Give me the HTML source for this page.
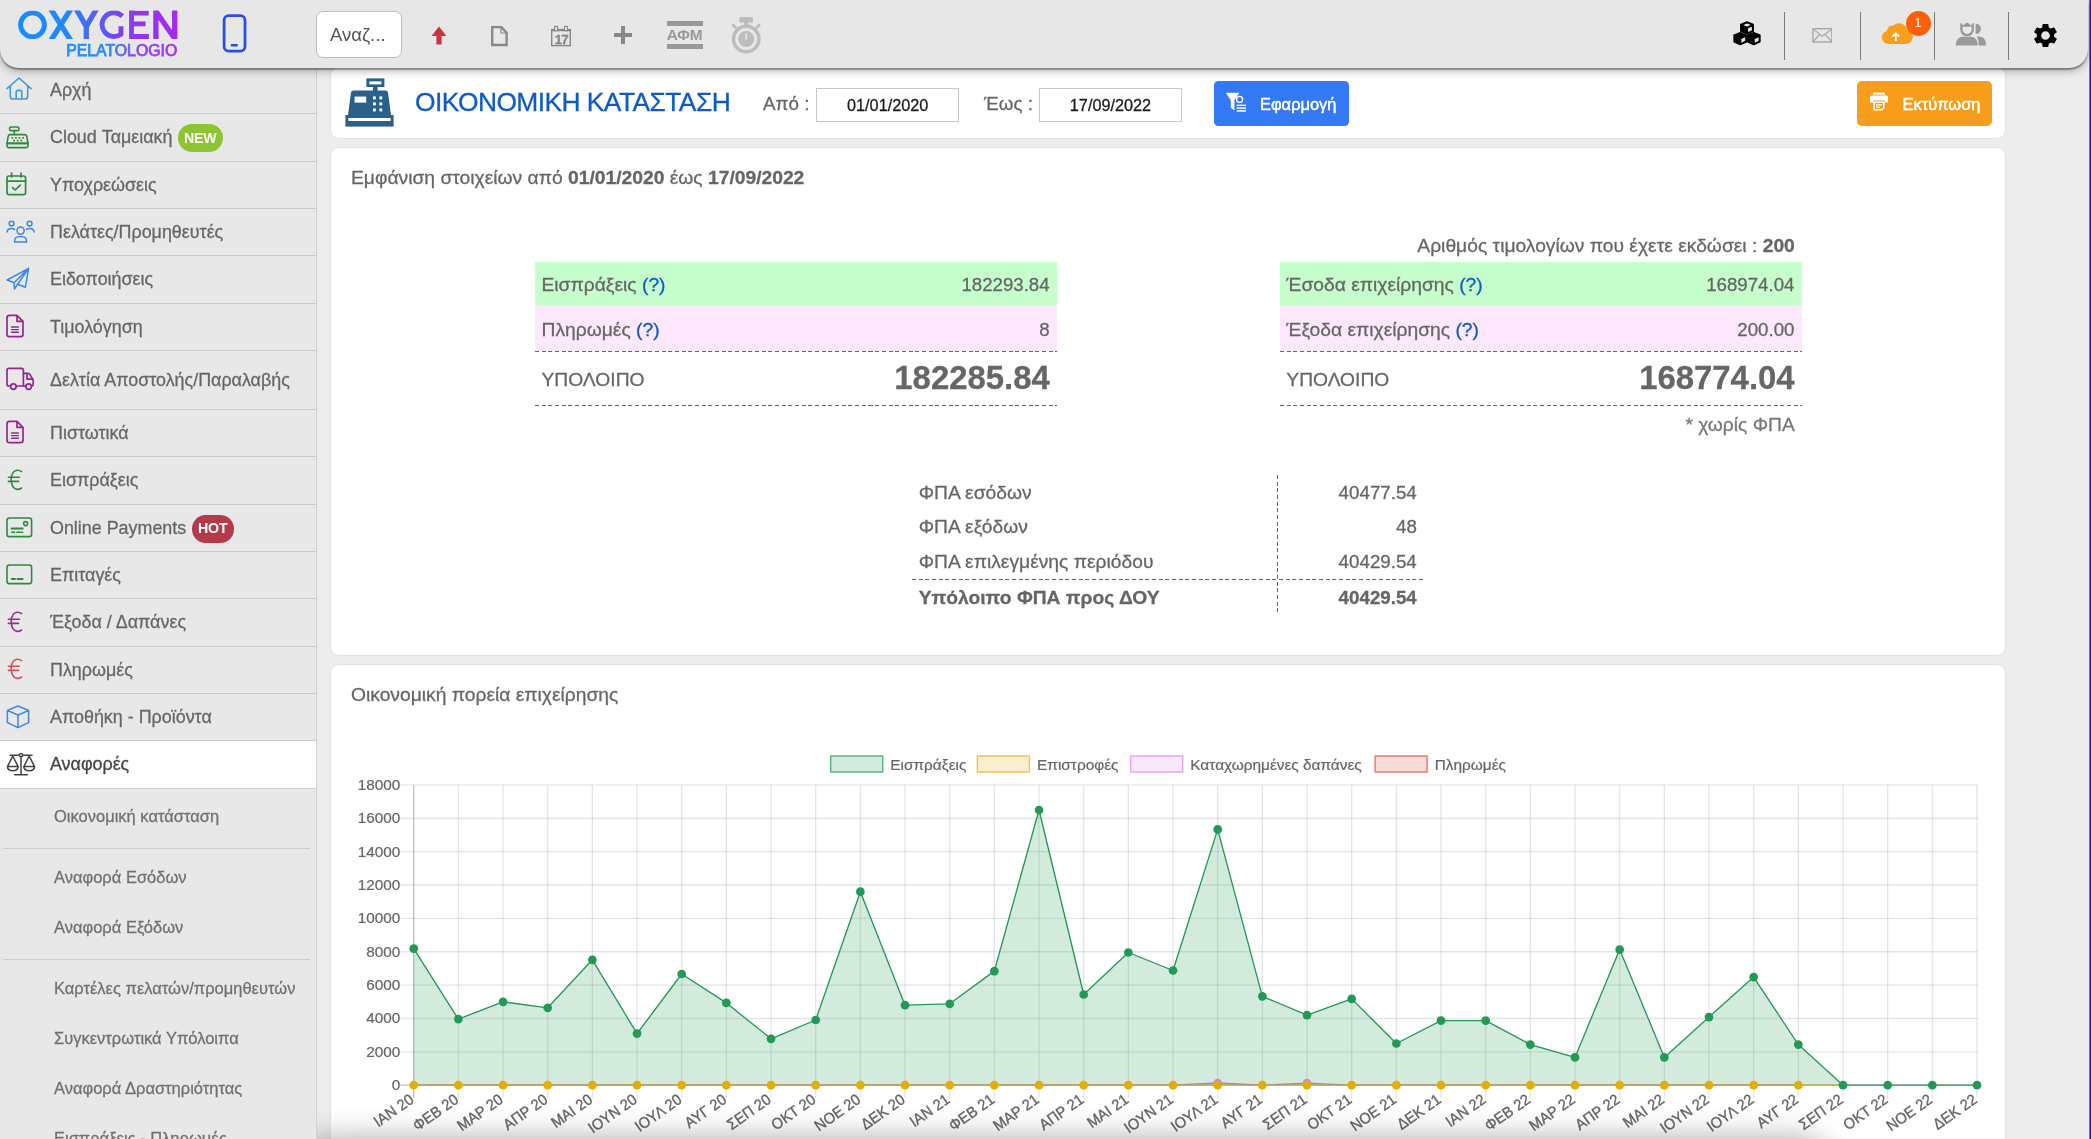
<!DOCTYPE html>
<html lang="el">
<head>
<meta charset="utf-8">
<title>Οικονομική Κατάσταση</title>
<style>
*{box-sizing:border-box}
html,body{margin:0;padding:0}
body{width:2091px;height:1139px;overflow:hidden;position:relative;background:#ededed;font-family:"Liberation Sans",sans-serif;color:#666;font-size:17.9px}
#edge{position:absolute;left:2089px;top:0;width:2px;height:1139px;background:linear-gradient(to right,rgba(17,17,216,.6) 0,rgba(17,17,216,.6) 1px,#1111d8 1px,#1111d8 2px);z-index:50}
#hdr{position:absolute;left:0;top:0;width:2088px;height:67.6px;background:#e7e7e7;border-radius:0 0 19px 19px;box-shadow:0 1.6px 1.2px rgba(0,0,0,.32),0 3px 8px rgba(0,0,0,.3);z-index:20}
#side{position:absolute;left:0;top:0;width:317px;height:1139px;background:#e8e8e8;border-right:1px solid #d2d2d2;z-index:5}
.mi{position:absolute;left:0;width:316px;border-bottom:1.4px solid #cbcbcb}
.mi span.t{position:absolute;left:50px;white-space:nowrap;color:#666;font-size:17.9px;line-height:20px}
.mi svg{position:absolute}
.sub{position:absolute;left:54px;white-space:nowrap;color:#707070;font-size:16.5px;line-height:20px}
.subsep{position:absolute;left:3px;width:307px;height:1px;background:#cfcfcf}
.card{position:absolute;background:#fff;border-radius:9px;z-index:2;border:1px solid #e3e3e3}
.abs{position:absolute;white-space:nowrap}
#content,#sidetxt,#hdrin{will-change:transform}
#side .t,#side .sub,#content div.abs{-webkit-text-stroke:.28px currentColor}
#fade{position:absolute;left:300px;top:1150px;width:1524px;height:60px;border-radius:30px;z-index:4;box-shadow:0 0 30px 12px rgba(0,0,0,.33)}
</style>
</head>
<body>
<div id="edge"></div>
<div id="hdr">
  <!-- logo -->
  <svg class="abs" style="left:0;top:0" width="262" height="68" viewBox="0 0 262 68">
    <defs>
      <linearGradient id="lg1" x1="18" y1="0" x2="178" y2="0" gradientUnits="userSpaceOnUse">
        <stop offset="0" stop-color="#188cff"/><stop offset=".3" stop-color="#1e88ff"/><stop offset=".45" stop-color="#4a68f8"/><stop offset=".56" stop-color="#6a50f5"/><stop offset=".68" stop-color="#8c3af2"/><stop offset=".8" stop-color="#9a30f2"/><stop offset="1" stop-color="#a42af6"/>
      </linearGradient>
      <linearGradient id="lg2" x1="66" y1="0" x2="178" y2="0" gradientUnits="userSpaceOnUse">
        <stop offset="0" stop-color="#1e90ff"/><stop offset=".4" stop-color="#2a86ff"/><stop offset=".62" stop-color="#8a48f5"/><stop offset="1" stop-color="#a832f5"/>
      </linearGradient>
    </defs>
    <clipPath id="lc"><rect x="0" y="10.6" width="200" height="28.5"/></clipPath>
    <g fill="none" stroke="url(#lg1)" clip-path="url(#lc)">
      <circle cx="32.5" cy="24.85" r="11.95" stroke-width="4.9"/>
      <path d="M50.1 8 L71.5 41.6 M71.5 8 L50.1 41.6" stroke-width="5.3"/>
      <path d="M75.6 8 L86.3 26.4 L97 8 M86.3 24.6 V42" stroke-width="5.3"/>
      <path d="M122.3 16.3 A11.85 11.85 0 1 0 120.95 34.2 V26.2" stroke-width="4.9" stroke-linejoin="miter"/>
      <path d="M131.5 10 V40 M129.1 13.1 H148.7 M129.1 23.8 H145.6 M129.1 36.5 H148.9" stroke-width="4.8"/>
      <path d="M155.9 42 V10 M174.7 8 V40 M155.3 10.4 L175.3 39.4" stroke-width="5.3" stroke-linejoin="bevel"/>
    </g>
    <text x="66.2" y="55.5" font-family="Liberation Sans, sans-serif" font-size="15.7" fill="url(#lg2)" stroke="url(#lg2)" stroke-width=".75" textLength="111" lengthAdjust="spacingAndGlyphs">PELATOLOGIO</text>
    <!-- phone -->
    <rect x="224.1" y="15.7" width="20.9" height="35.5" rx="4.6" fill="none" stroke="#2b4fe0" stroke-width="2.8"/>
    <rect x="230.7" y="44" width="7.2" height="2.4" rx="1" fill="#2b4fe0"/>
  </svg>
  <!-- search -->
  <div class="abs" style="left:316px;top:11px;width:86px;height:47px;background:#fff;border:1px solid #bdbdbd;border-radius:7px"></div>
  <div class="abs" style="left:330px;top:24px;font-size:18.5px;line-height:22px;color:#555">Αναζ...</div>
  <!-- red arrow -->
  <svg class="abs" style="left:431px;top:26px" width="16" height="19" viewBox="0 0 16 19"><path d="M8 .6 L15.4 10 H10.6 V18.4 H5.4 V10 H.6 Z" fill="#cc3340"/></svg>
  <!-- file -->
  <svg class="abs" style="left:490px;top:25px" width="19" height="22" viewBox="0 0 19 22"><path d="M2.2 2.2 H11.4 L16.6 7.6 V20 H2.2 Z" fill="none" stroke="#878787" stroke-width="2.3" stroke-linejoin="miter"/><path d="M11 2.6 V8 H16.2" fill="none" stroke="#878787" stroke-width="1.2"/></svg>
  <!-- calendar -->
  <svg class="abs" style="left:550px;top:25px" width="22" height="22" viewBox="0 0 22 22">
    <rect x="1.7" y="4.6" width="18.6" height="16" fill="none" stroke="#878787" stroke-width="1.4"/>
    <rect x="1.7" y="4.2" width="18.6" height="2" fill="#878787"/>
    <rect x="4.6" y="1.4" width="3" height="4.4" fill="#e8e8e8" stroke="#878787" stroke-width="1.1"/><rect x="14.4" y="1.4" width="3" height="4.4" fill="#e8e8e8" stroke="#878787" stroke-width="1.1"/>
    <text x="11.3" y="19.2" text-anchor="middle" font-family="Liberation Sans, sans-serif" font-weight="bold" font-size="13.4" fill="#878787" stroke="#878787" stroke-width=".3" letter-spacing="-1">17</text>
  </svg>
  <!-- plus -->
  <svg class="abs" style="left:614px;top:26px" width="18" height="18" viewBox="0 0 18 18"><path d="M7 0 H11 V7 H18 V11 H11 V18 H7 V11 H0 V7 H7 Z" fill="#878787"/></svg>
  <!-- AFM -->
  <div class="abs" style="left:666.5px;top:21px;width:36px;height:4.8px;background:#999"></div>
  <div class="abs" style="left:666.5px;top:43.8px;width:36px;height:4.8px;background:#999"></div>
  <div class="abs" style="left:666.5px;top:26.5px;width:36px;text-align:center;font-size:15.4px;line-height:16px;font-weight:bold;color:#979797;letter-spacing:-.2px">ΑΦΜ</div>
  <!-- stopwatch -->
  <svg class="abs" style="left:730px;top:16px" width="32" height="39" viewBox="0 0 32 39">
    <circle cx="16.2" cy="23" r="12.7" fill="none" stroke="#bdbdbd" stroke-width="3.5"/>
    <circle cx="16.2" cy="23" r="8" fill="#bdbdbd"/>
    <rect x="9.4" y="1" width="13.6" height="5.4" rx="1.2" fill="#bdbdbd"/>
    <rect x="14" y="5" width="4.4" height="5" fill="#bdbdbd"/>
    <path d="M3.6 9.6 L7 12.8 M28.8 9.6 L25.4 12.8" stroke="#bdbdbd" stroke-width="2.4" stroke-linecap="round"/>
    <circle cx="3.6" cy="9.4" r="1.7" fill="#bdbdbd"/><circle cx="28.8" cy="9.4" r="1.7" fill="#bdbdbd"/>
    <rect x="15.4" y="17.4" width="1.7" height="6.2" fill="#e8e8e8"/>
  </svg>
  <!-- cubes -->
  <svg class="abs" style="left:1733.4px;top:21.2px" width="28" height="25" viewBox="0 0 29 26" id="cubes">
    <g fill="#000" stroke="#000" stroke-width="1.4" stroke-linejoin="round">
      <path d="M14.5 1 L21 3.6 V10.6 L14.5 13.4 L8 10.6 V3.6 Z"/>
      <path d="M7.5 12 L14 14.6 V21.6 L7.5 24.6 L1 21.6 V14.6 Z"/>
      <path d="M21.5 12 L28 14.6 V21.6 L21.5 24.6 L15 21.6 V14.6 Z"/>
    </g>
    <g fill="#e8e8e8">
      <path d="M14.5 2.6 L18.4 4.2 L14.5 5.8 L10.6 4.2 Z"/>
      <path d="M15.6 7.6 L19.6 5.9 V9.6 L15.6 11.4 Z"/>
      <path d="M8.6 18.6 L12.6 16.9 V20.6 L8.6 22.5 Z"/>
      <path d="M22.6 18.6 L26.6 16.9 V20.6 L22.6 22.5 Z"/>
    </g>
  </svg>
  <div class="abs" style="left:1784px;top:12px;width:1px;height:48px;background:#7a7a7a"></div>
  <!-- envelope -->
  <svg class="abs" style="left:1811.6px;top:28.3px" width="20.8" height="14.8" viewBox="0 0 22 16"><rect x=".8" y=".8" width="20.4" height="14.4" fill="none" stroke="#a6a6a6" stroke-width="1.5"/><path d="M1 1.2 L11 9 L21 1.2 M1 14.8 L8 7 M21 14.8 L14 7" fill="none" stroke="#a6a6a6" stroke-width="1.3"/></svg>
  <div class="abs" style="left:1859.5px;top:12px;width:1px;height:48px;background:#7a7a7a"></div>
  <!-- cloud -->
  <svg class="abs" style="left:1881px;top:22px" width="32" height="23" viewBox="0 0 32 23">
    <path d="M7.2 22 A6.6 6.6 0 0 1 5.8 9 A6.6 6.6 0 0 1 12.4 3.6 A8.4 8.4 0 0 1 26.4 8.2 A7 7 0 0 1 24.8 22 Z" fill="#f8a01e"/>
    <path d="M14.8 19 V11.6 M11.4 14.6 L14.8 11.2 L18.2 14.6" fill="none" stroke="#fff" stroke-width="1.8"/>
  </svg>
  <div class="abs" style="left:1905.5px;top:11px;width:25px;height:25px;border-radius:50%;background:#ff5f06;color:#fff;font-size:12.5px;line-height:24.5px;text-align:center">1</div>
  <div class="abs" style="left:1934px;top:12px;width:1px;height:48px;background:#7a7a7a"></div>
  <!-- users -->
  <svg class="abs" style="left:1955px;top:22px" width="32" height="24" viewBox="0 0 32 24">
    <g fill="#9a9a9a">
      <path d="M20.6 1.4 A5.3 5.3 0 0 1 20.6 12 Z"/>
      <path d="M21.6 14.6 H23.6 C28 14.6 31 17.6 31 22 V23.4 H23.6 V21 C23.6 18.4 22.8 16.2 21.6 14.6 Z"/>
      <path d="M.9 23.4 V22 C.9 17.6 4.4 14.4 8.8 14.4 H15 C19.4 14.4 22.6 17.6 22.6 22 V23.4 Z" stroke="#e8e8e8" stroke-width="1.3" paint-order="stroke"/>
      <path d="M5.2 .6 L8 3.2 L12.1 .4 L16.2 3.2 L19 .6 V7.6 A6.9 6.9 0 0 1 5.2 7.6 Z" stroke="#e8e8e8" stroke-width="1.1" paint-order="stroke"/>
    </g>
    <path d="M7.6 4.8 H16.6 V7.4 A4.5 4.5 0 0 1 7.6 7.4 Z" fill="#e8e8e8"/>
  </svg>
  <div class="abs" style="left:2008px;top:12px;width:1px;height:48px;background:#7a7a7a"></div>
  <!-- gear -->
  <svg class="abs" style="left:2031.4px;top:20.6px" width="29" height="29" viewBox="0 0 24 24"><path fill="#000" d="M19.14,12.94c0.04-0.3,0.06-0.61,0.06-0.94c0-0.32-0.02-0.64-0.07-0.94l2.03-1.58c0.18-0.14,0.23-0.41,0.12-0.61 l-1.92-3.32c-0.12-0.22-0.37-0.29-0.59-0.22l-2.39,0.96c-0.5-0.38-1.03-0.7-1.62-0.94L14.4,2.81c-0.04-0.24-0.24-0.41-0.48-0.41 h-3.84c-0.24,0-0.43,0.17-0.47,0.41L9.25,5.35C8.66,5.59,8.12,5.92,7.63,6.29L5.24,5.33c-0.22-0.08-0.47,0-0.59,0.22L2.74,8.87 C2.62,9.08,2.66,9.34,2.86,9.48l2.03,1.58C4.84,11.36,4.8,11.69,4.8,12s0.02,0.64,0.07,0.94l-2.03,1.58 c-0.18,0.14-0.23,0.41-0.12,0.61l1.92,3.32c0.12,0.22,0.37,0.29,0.59,0.22l2.39-0.96c0.5,0.38,1.03,0.7,1.62,0.94l0.36,2.54 c0.05,0.24,0.24,0.41,0.48,0.41h3.84c0.24,0,0.44-0.17,0.47-0.41l0.36-2.54c0.59-0.24,1.13-0.56,1.62-0.94l2.39,0.96 c0.22,0.08,0.47,0,0.59-0.22l1.92-3.32c0.12-0.22,0.07-0.47-0.12-0.61L19.14,12.94z M12,15.6c-1.98,0-3.6-1.62-3.6-3.6 s1.62-3.6,3.6-3.6s3.6,1.62,3.6,3.6S13.98,15.6,12,15.6z"/></svg>
</div>
<div id="side"><div id="sidetxt" style="position:absolute;left:0;top:0;width:316px;height:1139px">
<div class="mi" style="top:66.90px;height:47.33px">
<svg width="26" height="23" viewBox="0 0 26 23" style="left:6px;top:10.6px"><defs><linearGradient id="hg" x1="0" y1="0" x2="0" y2="1"><stop offset="0" stop-color="#4aa3f0"/><stop offset="1" stop-color="#3f9acb"/></linearGradient></defs><path d="M1 11.6 L13 1 L25 11.6 M4.3 9.4 V19.4 Q4.3 22 6.9 22 H19.1 Q21.7 22 21.7 19.4 V9.4 M10.2 22 V15.2 Q10.2 13.4 12 13.4 H14 Q15.8 13.4 15.8 15.2 V22" fill="none" stroke="#3f9ad8" stroke-width="1.6" stroke-linecap="round" stroke-linejoin="round"/></svg>
<span class="t" style="top:13.17px">Αρχή</span>
</div>
<div class="mi" style="top:114.23px;height:47.33px">
<svg width="23" height="25" viewBox="0 0 23 25" style="left:6px;top:11.4px"><g fill="none" stroke="#2e8b3a" stroke-width="1.6" stroke-linejoin="round" stroke-linecap="round"><rect x="3.6" y="1" width="9.4" height="3.6" rx="1.4"/><path d="M8.3 4.8 V8.6"/><path d="M4.2 8.6 H18.8 Q20.4 8.6 20.8 10.2 L22 17.4 H1 L2.2 10.2 Q2.6 8.6 4.2 8.6 Z"/><path d="M1 17.4 H22 V19.6 Q22 21.6 20 21.6 H3 Q1 21.6 1 19.6 Z"/></g><g fill="#2e8b3a"><rect x="5.4" y="11" width="1.8" height="1.6"/><rect x="9" y="11" width="1.8" height="1.6"/><rect x="12.6" y="11" width="1.8" height="1.6"/><rect x="16.2" y="11" width="1.8" height="1.6"/><rect x="7.2" y="13.8" width="1.8" height="1.6"/><rect x="10.8" y="13.8" width="1.8" height="1.6"/><rect x="14.4" y="13.8" width="1.8" height="1.6"/></g></svg>
<span class="t" style="top:13.17px">Cloud Ταμειακή</span>
<span class="abs" style="left:177.5px;top:10px;width:45.5px;height:28px;border-radius:14px;background:#8cc531;color:#fff;font-weight:bold;font-size:14.2px;line-height:28px;text-align:center;letter-spacing:-.2px">NEW</span>
</div>
<div class="mi" style="top:161.57px;height:47.33px">
<svg width="21" height="24" viewBox="0 0 21 24" style="left:6px;top:10.5px"><g fill="none" stroke="#2e8b3a" stroke-width="1.7" stroke-linecap="round" stroke-linejoin="round"><rect x="1" y="4" width="18.6" height="18.6" rx="2.2"/><path d="M1 9.2 H19.6 M5.6 1 V5 M15 1 V5 M6.6 15.6 L9.2 18 L14.2 13.2"/></g></svg>
<span class="t" style="top:13.17px">Υποχρεώσεις</span>
</div>
<div class="mi" style="top:208.90px;height:47.33px">
<svg width="30" height="23" viewBox="0 0 30 23" style="left:6px;top:11.6px"><g fill="none" stroke="#3b86e8" stroke-width="1.5" stroke-linecap="round" stroke-linejoin="round"><circle cx="14.6" cy="10.6" r="3.6"/><path d="M8.6 22 Q8 16.4 14.6 16.4 Q21.2 16.4 20.6 22 Z"/><circle cx="5.6" cy="3.6" r="2.4"/><circle cx="23.6" cy="3.6" r="2.4"/><path d="M1 12 Q1.4 8.4 5.6 8.4 Q7.6 8.4 8.6 9.4 M28.2 12 Q27.8 8.4 23.6 8.4 Q21.6 8.4 20.6 9.4"/></g></svg>
<span class="t" style="top:13.17px">Πελάτες/Προμηθευτές</span>
</div>
<div class="mi" style="top:256.23px;height:47.33px">
<svg width="24" height="24" viewBox="0 0 24 24" style="left:6px;top:11.0px"><g fill="none" stroke="#3b86e8" stroke-width="1.5" stroke-linejoin="round" stroke-linecap="round"><path d="M22.6 1.4 L1.2 13 L8 15.8 L22.6 1.4 L19.4 20.2 L11.6 17.2 L8.4 22 L8 15.8 M11.6 17.2 L22.6 1.4"/></g></svg>
<span class="t" style="top:13.17px">Ειδοποιήσεις</span>
</div>
<div class="mi" style="top:303.57px;height:47.33px">
<svg width="19" height="24" viewBox="0 0 19 24" style="left:6px;top:10.6px"><g fill="none" stroke="#93278f" stroke-width="1.7" stroke-linejoin="round" stroke-linecap="round"><path d="M3.4 1.4 H11 L17 7.4 V20.2 Q17 22.6 14.6 22.6 H3.4 Q1 22.6 1 20.2 V3.8 Q1 1.4 3.4 1.4 Z M11 1.6 V7.4 H16.8"/><path d="M5.6 13 H12.4 M5.6 15.6 H12.4 M5.6 18.2 H12.4" stroke-width="1.4"/></g></svg>
<span class="t" style="top:13.17px">Τιμολόγηση</span>
</div>
<div class="mi" style="top:350.90px;height:59.00px">
<svg width="29" height="24" viewBox="0 0 29 24" style="left:6px;top:16.0px"><g fill="none" stroke="#93278f" stroke-width="1.7" stroke-linejoin="round" stroke-linecap="round"><path d="M4.6 19 H3 Q1 19 1 17 V3.4 Q1 1.4 3 1.4 H15.4 Q17.4 1.4 17.4 3.4 V19 H10.2"/><path d="M17.4 6.4 H22 Q23.4 6.4 24.2 7.8 L26.6 12 Q27.2 13 27.2 14 V17.6 Q27.2 19 25.8 19 H25.6 M19.8 19 H17.4"/><path d="M21 6.6 V12.2 H26.4"/><circle cx="7.4" cy="19.6" r="2.8"/><circle cx="22.6" cy="19.6" r="2.8"/></g></svg>
<span class="t" style="top:19.00px">Δελτία Αποστολής/Παραλαβής</span>
</div>
<div class="mi" style="top:409.90px;height:47.33px">
<svg width="19" height="24" viewBox="0 0 19 24" style="left:6px;top:10.6px"><g fill="none" stroke="#93278f" stroke-width="1.7" stroke-linejoin="round" stroke-linecap="round"><path d="M3.4 1.4 H11 L17 7.4 V20.2 Q17 22.6 14.6 22.6 H3.4 Q1 22.6 1 20.2 V3.8 Q1 1.4 3.4 1.4 Z M11 1.6 V7.4 H16.8"/><path d="M5.6 13 H12.4 M5.6 15.6 H12.4 M5.6 18.2 H12.4" stroke-width="1.4"/></g></svg>
<span class="t" style="top:13.17px">Πιστωτικά</span>
</div>
<div class="mi" style="top:457.23px;height:47.33px">
<svg width="16" height="22" viewBox="0 0 16 22" style="left:7px;top:11.6px"><g fill="none" stroke="#2e8b3a" stroke-width="1.6" stroke-linecap="round"><path d="M14.6 2.6 Q12.4 1 10 1.2 Q4.4 2 4.2 10.6 Q4.4 19.4 10 20.4 Q12.4 20.6 14.6 19"/><path d="M1.4 8.2 H12.4 M1.4 12.4 H11.6"/></g></svg>
<span class="t" style="top:13.17px">Εισπράξεις</span>
</div>
<div class="mi" style="top:504.57px;height:47.33px">
<svg width="27" height="21" viewBox="0 0 27 21" style="left:6px;top:12.4px"><g fill="none" stroke="#2e8b3a" stroke-width="1.6" stroke-linejoin="round" stroke-linecap="round"><rect x="1" y="1" width="24.6" height="18.6" rx="2.4"/><circle cx="19.6" cy="6.6" r="2"/><path d="M5.6 11.6 H16.6" stroke-width="2"/><path d="M5.6 15.2 H8.6 M10.8 15.2 H16.4" stroke-width="1.5"/></g></svg>
<span class="t" style="top:13.17px">Online Payments</span>
<span class="abs" style="left:191.5px;top:10.6px;width:42.5px;height:27.4px;border-radius:13.7px;background:#b43a4a;color:#fff;font-weight:bold;font-size:14.2px;line-height:27.4px;text-align:center;letter-spacing:-.2px">HOT</span>
</div>
<div class="mi" style="top:551.90px;height:47.33px">
<svg width="27" height="21" viewBox="0 0 27 21" style="left:6px;top:12.4px"><g fill="none" stroke="#2e8b3a" stroke-width="1.6" stroke-linejoin="round" stroke-linecap="round"><rect x="1" y="1" width="24.6" height="18.6" rx="2.4"/><path d="M5.8 15 H9 M11.4 15 H16.6" stroke-width="1.9"/></g></svg>
<span class="t" style="top:13.17px">Επιταγές</span>
</div>
<div class="mi" style="top:599.23px;height:47.33px">
<svg width="16" height="22" viewBox="0 0 16 22" style="left:7px;top:11.6px"><g fill="none" stroke="#9b2d96" stroke-width="1.6" stroke-linecap="round"><path d="M14.6 2.6 Q12.4 1 10 1.2 Q4.4 2 4.2 10.6 Q4.4 19.4 10 20.4 Q12.4 20.6 14.6 19"/><path d="M1.4 8.2 H12.4 M1.4 12.4 H11.6"/></g></svg>
<span class="t" style="top:13.17px">Έξοδα / Δαπάνες</span>
</div>
<div class="mi" style="top:646.57px;height:47.33px">
<svg width="16" height="22" viewBox="0 0 16 22" style="left:7px;top:11.6px"><g fill="none" stroke="#d0525a" stroke-width="1.6" stroke-linecap="round"><path d="M14.6 2.6 Q12.4 1 10 1.2 Q4.4 2 4.2 10.6 Q4.4 19.4 10 20.4 Q12.4 20.6 14.6 19"/><path d="M1.4 8.2 H12.4 M1.4 12.4 H11.6"/></g></svg>
<span class="t" style="top:13.17px">Πληρωμές</span>
</div>
<div class="mi" style="top:693.90px;height:47.33px">
<svg width="24" height="24" viewBox="0 0 24 24" style="left:6px;top:10.8px"><g fill="none" stroke="#3b86e8" stroke-width="1.5" stroke-linejoin="round" stroke-linecap="round"><path d="M12 1 L22.6 5.4 V17.6 L12 22.6 L1.4 17.6 V5.4 Z M1.6 5.6 L12 10 L22.4 5.6 M12 10 V22.4"/></g></svg>
<span class="t" style="top:13.17px">Αποθήκη - Προϊόντα</span>
</div>
<div class="mi" style="top:741.23px;height:47.33px;background:#fff">
<svg width="30" height="23" viewBox="0 0 30 23" style="left:6px;top:11.6px"><g fill="none" stroke="#444" stroke-width="1.5" stroke-linejoin="round" stroke-linecap="round"><path d="M4 2.2 H26 M15 2.4 V21.6 M8.6 21.8 H21.4"/><circle cx="15" cy="2.2" r="1.6" fill="#fff"/><path d="M6.8 3 L1.6 13.4 H12 L6.8 3 M1.4 13.4 Q1.6 17.8 6.8 17.8 Q12 17.8 12.2 13.4"/><path d="M23.2 3 L18 13.4 H28.4 L23.2 3 M17.8 13.4 Q18 17.8 23.2 17.8 Q28.4 17.8 28.6 13.4"/></g></svg>
<span class="t" style="top:13.17px;color:#444">Αναφορές</span>
</div>
<div class="sub" style="top:805.5px">Οικονομική κατάσταση</div>
<div class="sub" style="top:867.0px">Αναφορά Εσόδων</div>
<div class="sub" style="top:916.9px">Αναφορά Εξόδων</div>
<div class="sub" style="top:978.0px">Καρτέλες πελατών/προμηθευτών</div>
<div class="sub" style="top:1028.4px">Συγκεντρωτικά Υπόλοιπα</div>
<div class="sub" style="top:1078.0px">Αναφορά Δραστηριότητας</div>
<div class="sub" style="top:1128.3px">Εισπράξεις - Πληρωμές</div>
<div class="subsep" style="top:847.6px"></div>
<div class="subsep" style="top:958.7px"></div>
</div></div>
<div class="card" style="left:330.2px;top:65.5px;width:1675.4px;height:73.5px"></div>
<div class="card" style="left:330.2px;top:147.2px;width:1675.4px;height:508.4px"></div>
<div class="card" style="left:330.2px;top:664.2px;width:1675.4px;height:520px"></div>
<div id="content" style="position:absolute;left:0;top:0;width:2091px;height:1139px;z-index:3">
<svg class="abs" style="left:345px;top:78px" width="49" height="49" viewBox="0 0 49 49">
<g fill="#2a608b"><rect x="21.4" y="0.4" width="18" height="8.6"/><rect x="28" y="8" width="4.6" height="5"/>
<path d="M8.6 12.4 H40.4 Q42.6 12.4 43 14.6 L46 37 H3 L6 14.6 Q6.4 12.4 8.6 12.4 Z"/>
<rect x="0.4" y="37" width="48.2" height="11.6"/></g>
<g fill="#fff"><rect x="24.4" y="3.4" width="12" height="3"/><rect x="9.6" y="18.6" width="11.6" height="6"/>
<rect x="28" y="18.4" width="2.8" height="3"/><rect x="34.4" y="18.4" width="2.8" height="3"/>
<rect x="28" y="24.4" width="2.8" height="3"/><rect x="34.4" y="24.4" width="2.8" height="3"/>
<rect x="28" y="30.4" width="2.8" height="3"/><rect x="34.4" y="30.4" width="2.8" height="3"/>
<rect x="3.4" y="40" width="42.2" height="3"/></g></svg>
<div class="abs" style="left:415.0px;top:86.71px;font-size:26.4px;line-height:31.68px;color:#0d5bc6;font-weight:normal;letter-spacing:-.57px;">ΟΙΚΟΝΟΜΙΚΗ ΚΑΤΑΣΤΑΣΗ</div>
<div class="abs" style="left:763.0px;top:93.21px;font-size:18.8px;line-height:22.56px;color:#666;font-weight:normal;">Από :</div>
<div class="abs" style="left:984.0px;top:93.21px;font-size:18.8px;line-height:22.56px;color:#666;font-weight:normal;">Έως :</div>
<div class="abs" style="left:816.2px;top:87.6px;width:143px;height:34px;border:1px solid #c8c8c8;background:#fff"></div>
<div class="abs" style="left:1039px;top:87.6px;width:143px;height:34px;border:1px solid #c8c8c8;background:#fff"></div>
<div class="abs" style="left:0.0px;top:95.62px;font-size:16.25px;line-height:19.50px;color:#1c1c1c;font-weight:normal;left:816.2px;width:143px;text-align:center;">01/01/2020</div>
<div class="abs" style="left:0.0px;top:95.62px;font-size:16.25px;line-height:19.50px;color:#1c1c1c;font-weight:normal;left:1039px;width:143px;text-align:center;">17/09/2022</div>
<div class="abs" style="left:1214.4px;top:81px;width:134.6px;height:44.5px;border-radius:4.5px;background:#3479f6"></div>
<svg class="abs" style="left:1225px;top:91.5px" width="23" height="21" viewBox="0 0 23 21"><g fill="#fff"><path d="M.8 .8 H14.4 L9.4 8.2 V18.6 L5.8 15.8 V8.2 Z"/><circle cx="14.6" cy="7.4" r="3" fill="none" stroke="#fff" stroke-width="1.4"/><rect x="11.6" y="12.6" width="9.4" height="1.5"/><rect x="11.6" y="15.4" width="9.4" height="1.5"/><rect x="11.6" y="18.2" width="9.4" height="1.5"/></g></svg>
<div class="abs" style="left:1260.0px;top:95.43px;font-size:16.45px;line-height:19.74px;color:#fff;font-weight:normal;text-shadow:0 0 .6px #fff;">Εφαρμογή</div>
<div class="abs" style="left:1856.8px;top:81px;width:135.5px;height:44.6px;border-radius:5px;background:#f89c1b"></div>
<svg class="abs" style="left:1869px;top:92px" width="20" height="19" viewBox="0 0 20 19"><g fill="#fff"><rect x="4" y=".6" width="12" height="2"/><path d="M3 3.6 H17 Q19 3.6 19 5.6 V10.6 H15.6 V8.4 H4.4 V10.6 H1 V5.6 Q1 3.6 3 3.6 Z"/><path d="M4.4 9.6 H15.6 V16 L13.2 18.4 H4.4 Z M6 11 V17 H12.4 L14 15.4 V11 Z"/><rect x="7" y="12.2" width="6" height="1.3"/><rect x="7" y="14.6" width="4" height="1.3"/></g></svg>
<div class="abs" style="left:1902.6px;top:95.03px;font-size:16.45px;line-height:19.74px;color:#fff;font-weight:normal;text-shadow:0 0 .6px #fff;">Εκτύπωση</div>
<div class="abs" style="left:351.0px;top:166.18px;font-size:19.25px;line-height:23.10px;color:#666;font-weight:normal;">Εμφάνιση στοιχείων από <b>01/01/2020</b> έως <b>17/09/2022</b></div>
<div class="abs" style="left:535px;top:261.6px;width:522px;height:44.6px;background:#c6ffcc"></div>
<div class="abs" style="left:535px;top:306.2px;width:522px;height:44.6px;background:#fee8fe"></div>
<div class="abs" style="left:535px;top:350.7px;width:522px;height:1.3px;background:repeating-linear-gradient(to right,#666 0,#666 4px,transparent 4px,transparent 6.67px)"></div>
<div class="abs" style="left:535px;top:404.59999999999997px;width:522px;height:1.3px;background:repeating-linear-gradient(to right,#666 0,#666 4px,transparent 4px,transparent 6.67px)"></div>
<div class="abs" style="left:541.5px;top:272.58px;font-size:19.25px;line-height:23.10px;color:#666;font-weight:normal;">Εισπράξεις <span style="color:#0d5bc6">(?)</span></div>
<div class="abs" style="left:541.5px;top:317.58px;font-size:19.25px;line-height:23.10px;color:#666;font-weight:normal;">Πληρωμές <span style="color:#0d5bc6">(?)</span></div>
<div class="abs" style="left:541.5px;top:367.58px;font-size:19.25px;line-height:23.10px;color:#666;font-weight:normal;">ΥΠΟΛΟΙΠΟ</div>
<div class="abs" style="right:1041.4px;top:273.63px;font-size:18.67px;line-height:22.40px;color:#666;font-weight:normal;">182293.84</div>
<div class="abs" style="right:1041.4px;top:318.63px;font-size:18.67px;line-height:22.40px;color:#666;font-weight:normal;">8</div>
<div class="abs" style="right:1041.2px;top:357.56px;font-size:32.9px;line-height:39.48px;color:#666;font-weight:bold;">182285.84</div>
<div class="abs" style="left:1279.8px;top:261.6px;width:522px;height:44.6px;background:#c6ffcc"></div>
<div class="abs" style="left:1279.8px;top:306.2px;width:522px;height:44.6px;background:#fee8fe"></div>
<div class="abs" style="left:1279.8px;top:350.7px;width:522px;height:1.3px;background:repeating-linear-gradient(to right,#666 0,#666 4px,transparent 4px,transparent 6.67px)"></div>
<div class="abs" style="left:1279.8px;top:404.59999999999997px;width:522px;height:1.3px;background:repeating-linear-gradient(to right,#666 0,#666 4px,transparent 4px,transparent 6.67px)"></div>
<div class="abs" style="left:1286.3px;top:272.58px;font-size:19.25px;line-height:23.10px;color:#666;font-weight:normal;">Έσοδα επιχείρησης <span style="color:#0d5bc6">(?)</span></div>
<div class="abs" style="left:1286.3px;top:317.58px;font-size:19.25px;line-height:23.10px;color:#666;font-weight:normal;">Έξοδα επιχείρησης <span style="color:#0d5bc6">(?)</span></div>
<div class="abs" style="left:1286.3px;top:367.58px;font-size:19.25px;line-height:23.10px;color:#666;font-weight:normal;">ΥΠΟΛΟΙΠΟ</div>
<div class="abs" style="right:296.6px;top:273.63px;font-size:18.67px;line-height:22.40px;color:#666;font-weight:normal;">168974.04</div>
<div class="abs" style="right:296.6px;top:318.63px;font-size:18.67px;line-height:22.40px;color:#666;font-weight:normal;">200.00</div>
<div class="abs" style="right:296.4px;top:357.56px;font-size:32.9px;line-height:39.48px;color:#666;font-weight:bold;">168774.04</div>
<div class="abs" style="right:296.2px;top:233.78px;font-size:19.25px;line-height:23.10px;color:#666;font-weight:normal;">Αριθμός τιμολογίων που έχετε εκδώσει : <b>200</b></div>
<div class="abs" style="right:296.2px;top:413.18px;font-size:19.25px;line-height:23.10px;color:#777;font-weight:normal;">* χωρίς ΦΠΑ</div>
<div class="abs" style="left:918.7px;top:481.08px;font-size:19.25px;line-height:23.10px;color:#666;font-weight:normal;">ΦΠΑ εσόδων</div>
<div class="abs" style="right:674.2px;top:481.55px;font-size:18.75px;line-height:22.50px;color:#666;font-weight:normal;">40477.54</div>
<div class="abs" style="left:918.7px;top:515.48px;font-size:19.25px;line-height:23.10px;color:#666;font-weight:normal;">ΦΠΑ εξόδων</div>
<div class="abs" style="right:674.2px;top:515.95px;font-size:18.75px;line-height:22.50px;color:#666;font-weight:normal;">48</div>
<div class="abs" style="left:918.7px;top:550.18px;font-size:19.25px;line-height:23.10px;color:#666;font-weight:normal;">ΦΠΑ επιλεγμένης περιόδου</div>
<div class="abs" style="right:674.2px;top:550.65px;font-size:18.75px;line-height:22.50px;color:#666;font-weight:normal;">40429.54</div>
<div class="abs" style="left:918.7px;top:586.38px;font-size:19.25px;line-height:23.10px;color:#666;font-weight:bold;">Υπόλοιπο ΦΠΑ προς ΔΟΥ</div>
<div class="abs" style="right:674.2px;top:586.85px;font-size:18.75px;line-height:22.50px;color:#666;font-weight:bold;">40429.54</div>
<div class="abs" style="left:912px;top:578.7px;width:512px;height:1.3px;background:repeating-linear-gradient(to right,#666 0,#666 4px,transparent 4px,transparent 6.67px)"></div>
<div class="abs" style="left:1276.9px;top:475px;width:1.3px;height:140px;background:repeating-linear-gradient(to bottom,#666 0,#666 4px,transparent 4px,transparent 6.67px)"></div>
<div class="abs" style="left:351.0px;top:683.28px;font-size:19.25px;line-height:23.10px;color:#666;font-weight:normal;">Οικονομική πορεία επιχείρησης</div>
<svg class="abs" style="left:331px;top:740px" width="1674" height="399" viewBox="331 740 1674 399" font-family="Liberation Sans, sans-serif">
<g fill="none"><path d="M400.4 784.90 H1977.6" stroke="rgba(0,0,0,.1)" stroke-width="1.33"/><path d="M400.4 818.27 H1977.6" stroke="rgba(0,0,0,.1)" stroke-width="1.33"/><path d="M400.4 851.63 H1977.6" stroke="rgba(0,0,0,.1)" stroke-width="1.33"/><path d="M400.4 885.00 H1977.6" stroke="rgba(0,0,0,.1)" stroke-width="1.33"/><path d="M400.4 918.37 H1977.6" stroke="rgba(0,0,0,.1)" stroke-width="1.33"/><path d="M400.4 951.73 H1977.6" stroke="rgba(0,0,0,.1)" stroke-width="1.33"/><path d="M400.4 985.10 H1977.6" stroke="rgba(0,0,0,.1)" stroke-width="1.33"/><path d="M400.4 1018.47 H1977.6" stroke="rgba(0,0,0,.1)" stroke-width="1.33"/><path d="M400.4 1051.83 H1977.6" stroke="rgba(0,0,0,.1)" stroke-width="1.33"/><path d="M400.4 1085.20 H1977.6" stroke="rgba(0,0,0,.25)" stroke-width="1.33"/><path d="M413.70 784.9 V1098.2" stroke="rgba(0,0,0,.25)" stroke-width="1.33"/><path d="M458.37 784.9 V1098.2" stroke="rgba(0,0,0,.1)" stroke-width="1.33"/><path d="M503.03 784.9 V1098.2" stroke="rgba(0,0,0,.1)" stroke-width="1.33"/><path d="M547.70 784.9 V1098.2" stroke="rgba(0,0,0,.1)" stroke-width="1.33"/><path d="M592.36 784.9 V1098.2" stroke="rgba(0,0,0,.1)" stroke-width="1.33"/><path d="M637.03 784.9 V1098.2" stroke="rgba(0,0,0,.1)" stroke-width="1.33"/><path d="M681.69 784.9 V1098.2" stroke="rgba(0,0,0,.1)" stroke-width="1.33"/><path d="M726.36 784.9 V1098.2" stroke="rgba(0,0,0,.1)" stroke-width="1.33"/><path d="M771.03 784.9 V1098.2" stroke="rgba(0,0,0,.1)" stroke-width="1.33"/><path d="M815.69 784.9 V1098.2" stroke="rgba(0,0,0,.1)" stroke-width="1.33"/><path d="M860.36 784.9 V1098.2" stroke="rgba(0,0,0,.1)" stroke-width="1.33"/><path d="M905.02 784.9 V1098.2" stroke="rgba(0,0,0,.1)" stroke-width="1.33"/><path d="M949.69 784.9 V1098.2" stroke="rgba(0,0,0,.1)" stroke-width="1.33"/><path d="M994.35 784.9 V1098.2" stroke="rgba(0,0,0,.1)" stroke-width="1.33"/><path d="M1039.02 784.9 V1098.2" stroke="rgba(0,0,0,.1)" stroke-width="1.33"/><path d="M1083.69 784.9 V1098.2" stroke="rgba(0,0,0,.1)" stroke-width="1.33"/><path d="M1128.35 784.9 V1098.2" stroke="rgba(0,0,0,.1)" stroke-width="1.33"/><path d="M1173.02 784.9 V1098.2" stroke="rgba(0,0,0,.1)" stroke-width="1.33"/><path d="M1217.68 784.9 V1098.2" stroke="rgba(0,0,0,.1)" stroke-width="1.33"/><path d="M1262.35 784.9 V1098.2" stroke="rgba(0,0,0,.1)" stroke-width="1.33"/><path d="M1307.01 784.9 V1098.2" stroke="rgba(0,0,0,.1)" stroke-width="1.33"/><path d="M1351.68 784.9 V1098.2" stroke="rgba(0,0,0,.1)" stroke-width="1.33"/><path d="M1396.35 784.9 V1098.2" stroke="rgba(0,0,0,.1)" stroke-width="1.33"/><path d="M1441.01 784.9 V1098.2" stroke="rgba(0,0,0,.1)" stroke-width="1.33"/><path d="M1485.68 784.9 V1098.2" stroke="rgba(0,0,0,.1)" stroke-width="1.33"/><path d="M1530.34 784.9 V1098.2" stroke="rgba(0,0,0,.1)" stroke-width="1.33"/><path d="M1575.01 784.9 V1098.2" stroke="rgba(0,0,0,.1)" stroke-width="1.33"/><path d="M1619.67 784.9 V1098.2" stroke="rgba(0,0,0,.1)" stroke-width="1.33"/><path d="M1664.34 784.9 V1098.2" stroke="rgba(0,0,0,.1)" stroke-width="1.33"/><path d="M1709.01 784.9 V1098.2" stroke="rgba(0,0,0,.1)" stroke-width="1.33"/><path d="M1753.67 784.9 V1098.2" stroke="rgba(0,0,0,.1)" stroke-width="1.33"/><path d="M1798.34 784.9 V1098.2" stroke="rgba(0,0,0,.1)" stroke-width="1.33"/><path d="M1843.00 784.9 V1098.2" stroke="rgba(0,0,0,.1)" stroke-width="1.33"/><path d="M1887.67 784.9 V1098.2" stroke="rgba(0,0,0,.1)" stroke-width="1.33"/><path d="M1932.33 784.9 V1098.2" stroke="rgba(0,0,0,.1)" stroke-width="1.33"/><path d="M1977.00 784.9 V1098.2" stroke="rgba(0,0,0,.1)" stroke-width="1.33"/></g>
<text x="400.3" y="789.8" text-anchor="end" font-size="15.3" fill="#666" stroke="#666" stroke-width=".22">18000</text>
<text x="400.3" y="823.2" text-anchor="end" font-size="15.3" fill="#666" stroke="#666" stroke-width=".22">16000</text>
<text x="400.3" y="856.5" text-anchor="end" font-size="15.3" fill="#666" stroke="#666" stroke-width=".22">14000</text>
<text x="400.3" y="889.9" text-anchor="end" font-size="15.3" fill="#666" stroke="#666" stroke-width=".22">12000</text>
<text x="400.3" y="923.3" text-anchor="end" font-size="15.3" fill="#666" stroke="#666" stroke-width=".22">10000</text>
<text x="400.3" y="956.6" text-anchor="end" font-size="15.3" fill="#666" stroke="#666" stroke-width=".22">8000</text>
<text x="400.3" y="990.0" text-anchor="end" font-size="15.3" fill="#666" stroke="#666" stroke-width=".22">6000</text>
<text x="400.3" y="1023.4" text-anchor="end" font-size="15.3" fill="#666" stroke="#666" stroke-width=".22">4000</text>
<text x="400.3" y="1056.7" text-anchor="end" font-size="15.3" fill="#666" stroke="#666" stroke-width=".22">2000</text>
<text x="400.3" y="1090.1" text-anchor="end" font-size="15.3" fill="#666" stroke="#666" stroke-width=".22">0</text>
<text transform="translate(411.7,1097.4) rotate(-35) scale(.95,1)" text-anchor="end" font-size="15.4" fill="#666" stroke="#666" stroke-width=".34" dy="5.5">ΙΑΝ 20</text>
<text transform="translate(456.4,1097.4) rotate(-35) scale(.95,1)" text-anchor="end" font-size="15.4" fill="#666" stroke="#666" stroke-width=".34" dy="5.5">ΦΕΒ 20</text>
<text transform="translate(501.0,1097.4) rotate(-35) scale(.95,1)" text-anchor="end" font-size="15.4" fill="#666" stroke="#666" stroke-width=".34" dy="5.5">ΜΑΡ 20</text>
<text transform="translate(545.7,1097.4) rotate(-35) scale(.95,1)" text-anchor="end" font-size="15.4" fill="#666" stroke="#666" stroke-width=".34" dy="5.5">ΑΠΡ 20</text>
<text transform="translate(590.4,1097.4) rotate(-35) scale(.95,1)" text-anchor="end" font-size="15.4" fill="#666" stroke="#666" stroke-width=".34" dy="5.5">ΜΑΙ 20</text>
<text transform="translate(635.0,1097.4) rotate(-35) scale(.95,1)" text-anchor="end" font-size="15.4" fill="#666" stroke="#666" stroke-width=".34" dy="5.5">ΙΟΥΝ 20</text>
<text transform="translate(679.7,1097.4) rotate(-35) scale(.95,1)" text-anchor="end" font-size="15.4" fill="#666" stroke="#666" stroke-width=".34" dy="5.5">ΙΟΥΛ 20</text>
<text transform="translate(724.4,1097.4) rotate(-35) scale(.95,1)" text-anchor="end" font-size="15.4" fill="#666" stroke="#666" stroke-width=".34" dy="5.5">ΑΥΓ 20</text>
<text transform="translate(769.0,1097.4) rotate(-35) scale(.95,1)" text-anchor="end" font-size="15.4" fill="#666" stroke="#666" stroke-width=".34" dy="5.5">ΣΕΠ 20</text>
<text transform="translate(813.7,1097.4) rotate(-35) scale(.95,1)" text-anchor="end" font-size="15.4" fill="#666" stroke="#666" stroke-width=".34" dy="5.5">ΟΚΤ 20</text>
<text transform="translate(858.4,1097.4) rotate(-35) scale(.95,1)" text-anchor="end" font-size="15.4" fill="#666" stroke="#666" stroke-width=".34" dy="5.5">ΝΟΕ 20</text>
<text transform="translate(903.0,1097.4) rotate(-35) scale(.95,1)" text-anchor="end" font-size="15.4" fill="#666" stroke="#666" stroke-width=".34" dy="5.5">ΔΕΚ 20</text>
<text transform="translate(947.7,1097.4) rotate(-35) scale(.95,1)" text-anchor="end" font-size="15.4" fill="#666" stroke="#666" stroke-width=".34" dy="5.5">ΙΑΝ 21</text>
<text transform="translate(992.4,1097.4) rotate(-35) scale(.95,1)" text-anchor="end" font-size="15.4" fill="#666" stroke="#666" stroke-width=".34" dy="5.5">ΦΕΒ 21</text>
<text transform="translate(1037.0,1097.4) rotate(-35) scale(.95,1)" text-anchor="end" font-size="15.4" fill="#666" stroke="#666" stroke-width=".34" dy="5.5">ΜΑΡ 21</text>
<text transform="translate(1081.7,1097.4) rotate(-35) scale(.95,1)" text-anchor="end" font-size="15.4" fill="#666" stroke="#666" stroke-width=".34" dy="5.5">ΑΠΡ 21</text>
<text transform="translate(1126.4,1097.4) rotate(-35) scale(.95,1)" text-anchor="end" font-size="15.4" fill="#666" stroke="#666" stroke-width=".34" dy="5.5">ΜΑΙ 21</text>
<text transform="translate(1171.0,1097.4) rotate(-35) scale(.95,1)" text-anchor="end" font-size="15.4" fill="#666" stroke="#666" stroke-width=".34" dy="5.5">ΙΟΥΝ 21</text>
<text transform="translate(1215.7,1097.4) rotate(-35) scale(.95,1)" text-anchor="end" font-size="15.4" fill="#666" stroke="#666" stroke-width=".34" dy="5.5">ΙΟΥΛ 21</text>
<text transform="translate(1260.3,1097.4) rotate(-35) scale(.95,1)" text-anchor="end" font-size="15.4" fill="#666" stroke="#666" stroke-width=".34" dy="5.5">ΑΥΓ 21</text>
<text transform="translate(1305.0,1097.4) rotate(-35) scale(.95,1)" text-anchor="end" font-size="15.4" fill="#666" stroke="#666" stroke-width=".34" dy="5.5">ΣΕΠ 21</text>
<text transform="translate(1349.7,1097.4) rotate(-35) scale(.95,1)" text-anchor="end" font-size="15.4" fill="#666" stroke="#666" stroke-width=".34" dy="5.5">ΟΚΤ 21</text>
<text transform="translate(1394.3,1097.4) rotate(-35) scale(.95,1)" text-anchor="end" font-size="15.4" fill="#666" stroke="#666" stroke-width=".34" dy="5.5">ΝΟΕ 21</text>
<text transform="translate(1439.0,1097.4) rotate(-35) scale(.95,1)" text-anchor="end" font-size="15.4" fill="#666" stroke="#666" stroke-width=".34" dy="5.5">ΔΕΚ 21</text>
<text transform="translate(1483.7,1097.4) rotate(-35) scale(.95,1)" text-anchor="end" font-size="15.4" fill="#666" stroke="#666" stroke-width=".34" dy="5.5">ΙΑΝ 22</text>
<text transform="translate(1528.3,1097.4) rotate(-35) scale(.95,1)" text-anchor="end" font-size="15.4" fill="#666" stroke="#666" stroke-width=".34" dy="5.5">ΦΕΒ 22</text>
<text transform="translate(1573.0,1097.4) rotate(-35) scale(.95,1)" text-anchor="end" font-size="15.4" fill="#666" stroke="#666" stroke-width=".34" dy="5.5">ΜΑΡ 22</text>
<text transform="translate(1617.7,1097.4) rotate(-35) scale(.95,1)" text-anchor="end" font-size="15.4" fill="#666" stroke="#666" stroke-width=".34" dy="5.5">ΑΠΡ 22</text>
<text transform="translate(1662.3,1097.4) rotate(-35) scale(.95,1)" text-anchor="end" font-size="15.4" fill="#666" stroke="#666" stroke-width=".34" dy="5.5">ΜΑΙ 22</text>
<text transform="translate(1707.0,1097.4) rotate(-35) scale(.95,1)" text-anchor="end" font-size="15.4" fill="#666" stroke="#666" stroke-width=".34" dy="5.5">ΙΟΥΝ 22</text>
<text transform="translate(1751.7,1097.4) rotate(-35) scale(.95,1)" text-anchor="end" font-size="15.4" fill="#666" stroke="#666" stroke-width=".34" dy="5.5">ΙΟΥΛ 22</text>
<text transform="translate(1796.3,1097.4) rotate(-35) scale(.95,1)" text-anchor="end" font-size="15.4" fill="#666" stroke="#666" stroke-width=".34" dy="5.5">ΑΥΓ 22</text>
<text transform="translate(1841.0,1097.4) rotate(-35) scale(.95,1)" text-anchor="end" font-size="15.4" fill="#666" stroke="#666" stroke-width=".34" dy="5.5">ΣΕΠ 22</text>
<text transform="translate(1885.7,1097.4) rotate(-35) scale(.95,1)" text-anchor="end" font-size="15.4" fill="#666" stroke="#666" stroke-width=".34" dy="5.5">ΟΚΤ 22</text>
<text transform="translate(1930.3,1097.4) rotate(-35) scale(.95,1)" text-anchor="end" font-size="15.4" fill="#666" stroke="#666" stroke-width=".34" dy="5.5">ΝΟΕ 22</text>
<text transform="translate(1975.0,1097.4) rotate(-35) scale(.95,1)" text-anchor="end" font-size="15.4" fill="#666" stroke="#666" stroke-width=".34" dy="5.5">ΔΕΚ 22</text>
<path d="M413.70,1085.2 L413.70,1085.20 L458.37,1085.20 L503.03,1085.20 L547.70,1085.20 L592.36,1085.20 L637.03,1085.20 L681.69,1085.20 L726.36,1085.20 L771.03,1085.20 L815.69,1085.20 L860.36,1085.20 L905.02,1085.20 L949.69,1085.20 L994.35,1085.20 L1039.02,1085.20 L1083.69,1085.20 L1128.35,1085.20 L1173.02,1085.20 L1217.68,1083.00 L1262.35,1085.20 L1307.01,1083.20 L1351.68,1085.20 L1396.35,1085.20 L1441.01,1085.20 L1485.68,1085.20 L1530.34,1085.20 L1575.01,1085.20 L1619.67,1085.20 L1664.34,1085.20 L1709.01,1085.20 L1753.67,1085.20 L1798.34,1085.20 L1798.34,1085.2 Z" fill="rgba(224,138,240,.2)" stroke="none"/><polyline points="413.70,1085.20 458.37,1085.20 503.03,1085.20 547.70,1085.20 592.36,1085.20 637.03,1085.20 681.69,1085.20 726.36,1085.20 771.03,1085.20 815.69,1085.20 860.36,1085.20 905.02,1085.20 949.69,1085.20 994.35,1085.20 1039.02,1085.20 1083.69,1085.20 1128.35,1085.20 1173.02,1085.20 1217.68,1083.00 1262.35,1085.20 1307.01,1083.20 1351.68,1085.20 1396.35,1085.20 1441.01,1085.20 1485.68,1085.20 1530.34,1085.20 1575.01,1085.20 1619.67,1085.20 1664.34,1085.20 1709.01,1085.20 1753.67,1085.20 1798.34,1085.20" fill="none" stroke="#e06cec" stroke-width="1.33" stroke-linejoin="round"/>
<circle cx="1217.68" cy="1083.00" r="4.35" fill="#e88cf0"/><circle cx="1307.01" cy="1083.20" r="4.35" fill="#e88cf0"/>
<path d="M413.70,1085.2 L413.70,1085.20 L458.37,1085.20 L503.03,1085.20 L547.70,1085.20 L592.36,1085.20 L637.03,1085.20 L681.69,1085.20 L726.36,1085.20 L771.03,1085.20 L815.69,1085.20 L860.36,1085.20 L905.02,1085.20 L949.69,1085.20 L994.35,1085.20 L1039.02,1085.20 L1083.69,1085.20 L1128.35,1085.20 L1173.02,1085.20 L1217.68,1085.20 L1262.35,1085.20 L1307.01,1085.20 L1351.68,1085.20 L1396.35,1085.20 L1441.01,1085.20 L1485.68,1085.20 L1530.34,1085.20 L1575.01,1085.20 L1619.67,1085.20 L1664.34,1085.20 L1709.01,1085.20 L1753.67,1085.20 L1798.34,1085.20 L1843.00,1085.20 L1843.00,1085.2 Z" fill="rgba(230,172,0,.2)" stroke="none"/><polyline points="413.70,1085.20 458.37,1085.20 503.03,1085.20 547.70,1085.20 592.36,1085.20 637.03,1085.20 681.69,1085.20 726.36,1085.20 771.03,1085.20 815.69,1085.20 860.36,1085.20 905.02,1085.20 949.69,1085.20 994.35,1085.20 1039.02,1085.20 1083.69,1085.20 1128.35,1085.20 1173.02,1085.20 1217.68,1085.20 1262.35,1085.20 1307.01,1085.20 1351.68,1085.20 1396.35,1085.20 1441.01,1085.20 1485.68,1085.20 1530.34,1085.20 1575.01,1085.20 1619.67,1085.20 1664.34,1085.20 1709.01,1085.20 1753.67,1085.20 1798.34,1085.20 1843.00,1085.20" fill="none" stroke="#e6ac00" stroke-width="1.25" stroke-linejoin="round"/>
<path d="M413.70,1085.2 L413.70,948.70 L458.37,1019.10 L503.03,1001.80 L547.70,1007.80 L592.36,959.80 L637.03,1033.60 L681.69,974.00 L726.36,1002.90 L771.03,1038.80 L815.69,1020.00 L860.36,891.70 L905.02,1005.20 L949.69,1003.80 L994.35,971.10 L1039.02,810.00 L1083.69,994.50 L1128.35,952.50 L1173.02,970.50 L1217.68,829.40 L1262.35,996.30 L1307.01,1015.10 L1351.68,998.90 L1396.35,1043.50 L1441.01,1020.60 L1485.68,1020.60 L1530.34,1044.60 L1575.01,1057.40 L1619.67,949.60 L1664.34,1057.40 L1709.01,1017.10 L1753.67,977.10 L1798.34,1044.60 L1843.00,1085.20 L1887.67,1085.20 L1932.33,1085.20 L1977.00,1085.20 L1977.00,1085.2 Z" fill="rgba(34,153,84,.2)" stroke="none"/><polyline points="413.70,948.70 458.37,1019.10 503.03,1001.80 547.70,1007.80 592.36,959.80 637.03,1033.60 681.69,974.00 726.36,1002.90 771.03,1038.80 815.69,1020.00 860.36,891.70 905.02,1005.20 949.69,1003.80 994.35,971.10 1039.02,810.00 1083.69,994.50 1128.35,952.50 1173.02,970.50 1217.68,829.40 1262.35,996.30 1307.01,1015.10 1351.68,998.90 1396.35,1043.50 1441.01,1020.60 1485.68,1020.60 1530.34,1044.60 1575.01,1057.40 1619.67,949.60 1664.34,1057.40 1709.01,1017.10 1753.67,977.10 1798.34,1044.60 1843.00,1085.20 1887.67,1085.20 1932.33,1085.20 1977.00,1085.20" fill="none" stroke="#229954" stroke-width="1.33" stroke-linejoin="round"/>
<circle cx="413.70" cy="1085.20" r="4.35" fill="#e6ac00"/><circle cx="458.37" cy="1085.20" r="4.35" fill="#e6ac00"/><circle cx="503.03" cy="1085.20" r="4.35" fill="#e6ac00"/><circle cx="547.70" cy="1085.20" r="4.35" fill="#e6ac00"/><circle cx="592.36" cy="1085.20" r="4.35" fill="#e6ac00"/><circle cx="637.03" cy="1085.20" r="4.35" fill="#e6ac00"/><circle cx="681.69" cy="1085.20" r="4.35" fill="#e6ac00"/><circle cx="726.36" cy="1085.20" r="4.35" fill="#e6ac00"/><circle cx="771.03" cy="1085.20" r="4.35" fill="#e6ac00"/><circle cx="815.69" cy="1085.20" r="4.35" fill="#e6ac00"/><circle cx="860.36" cy="1085.20" r="4.35" fill="#e6ac00"/><circle cx="905.02" cy="1085.20" r="4.35" fill="#e6ac00"/><circle cx="949.69" cy="1085.20" r="4.35" fill="#e6ac00"/><circle cx="994.35" cy="1085.20" r="4.35" fill="#e6ac00"/><circle cx="1039.02" cy="1085.20" r="4.35" fill="#e6ac00"/><circle cx="1083.69" cy="1085.20" r="4.35" fill="#e6ac00"/><circle cx="1128.35" cy="1085.20" r="4.35" fill="#e6ac00"/><circle cx="1173.02" cy="1085.20" r="4.35" fill="#e6ac00"/><circle cx="1217.68" cy="1085.20" r="4.35" fill="#e6ac00"/><circle cx="1262.35" cy="1085.20" r="4.35" fill="#e6ac00"/><circle cx="1307.01" cy="1085.20" r="4.35" fill="#e6ac00"/><circle cx="1351.68" cy="1085.20" r="4.35" fill="#e6ac00"/><circle cx="1396.35" cy="1085.20" r="4.35" fill="#e6ac00"/><circle cx="1441.01" cy="1085.20" r="4.35" fill="#e6ac00"/><circle cx="1485.68" cy="1085.20" r="4.35" fill="#e6ac00"/><circle cx="1530.34" cy="1085.20" r="4.35" fill="#e6ac00"/><circle cx="1575.01" cy="1085.20" r="4.35" fill="#e6ac00"/><circle cx="1619.67" cy="1085.20" r="4.35" fill="#e6ac00"/><circle cx="1664.34" cy="1085.20" r="4.35" fill="#e6ac00"/><circle cx="1709.01" cy="1085.20" r="4.35" fill="#e6ac00"/><circle cx="1753.67" cy="1085.20" r="4.35" fill="#e6ac00"/><circle cx="1798.34" cy="1085.20" r="4.35" fill="#e6ac00"/>
<circle cx="413.70" cy="948.70" r="4.35" fill="#229954"/><circle cx="458.37" cy="1019.10" r="4.35" fill="#229954"/><circle cx="503.03" cy="1001.80" r="4.35" fill="#229954"/><circle cx="547.70" cy="1007.80" r="4.35" fill="#229954"/><circle cx="592.36" cy="959.80" r="4.35" fill="#229954"/><circle cx="637.03" cy="1033.60" r="4.35" fill="#229954"/><circle cx="681.69" cy="974.00" r="4.35" fill="#229954"/><circle cx="726.36" cy="1002.90" r="4.35" fill="#229954"/><circle cx="771.03" cy="1038.80" r="4.35" fill="#229954"/><circle cx="815.69" cy="1020.00" r="4.35" fill="#229954"/><circle cx="860.36" cy="891.70" r="4.35" fill="#229954"/><circle cx="905.02" cy="1005.20" r="4.35" fill="#229954"/><circle cx="949.69" cy="1003.80" r="4.35" fill="#229954"/><circle cx="994.35" cy="971.10" r="4.35" fill="#229954"/><circle cx="1039.02" cy="810.00" r="4.35" fill="#229954"/><circle cx="1083.69" cy="994.50" r="4.35" fill="#229954"/><circle cx="1128.35" cy="952.50" r="4.35" fill="#229954"/><circle cx="1173.02" cy="970.50" r="4.35" fill="#229954"/><circle cx="1217.68" cy="829.40" r="4.35" fill="#229954"/><circle cx="1262.35" cy="996.30" r="4.35" fill="#229954"/><circle cx="1307.01" cy="1015.10" r="4.35" fill="#229954"/><circle cx="1351.68" cy="998.90" r="4.35" fill="#229954"/><circle cx="1396.35" cy="1043.50" r="4.35" fill="#229954"/><circle cx="1441.01" cy="1020.60" r="4.35" fill="#229954"/><circle cx="1485.68" cy="1020.60" r="4.35" fill="#229954"/><circle cx="1530.34" cy="1044.60" r="4.35" fill="#229954"/><circle cx="1575.01" cy="1057.40" r="4.35" fill="#229954"/><circle cx="1619.67" cy="949.60" r="4.35" fill="#229954"/><circle cx="1664.34" cy="1057.40" r="4.35" fill="#229954"/><circle cx="1709.01" cy="1017.10" r="4.35" fill="#229954"/><circle cx="1753.67" cy="977.10" r="4.35" fill="#229954"/><circle cx="1798.34" cy="1044.60" r="4.35" fill="#229954"/><circle cx="1843.00" cy="1085.20" r="4.35" fill="#229954"/><circle cx="1887.67" cy="1085.20" r="4.35" fill="#229954"/><circle cx="1932.33" cy="1085.20" r="4.35" fill="#229954"/><circle cx="1977.00" cy="1085.20" r="4.35" fill="#229954"/>
<rect x="830.7" y="756" width="52" height="16" fill="rgba(34,153,84,.2)" stroke="#56b37e" stroke-width="1.4"/>
<text x="890.3" y="769.6" font-size="15.4" fill="#666" stroke="#666" stroke-width=".22">Εισπράξεις</text>
<rect x="977.4" y="756" width="52" height="16" fill="rgba(230,172,0,.2)" stroke="#efc04a" stroke-width="1.4"/>
<text x="1037" y="769.6" font-size="15.4" fill="#666" stroke="#666" stroke-width=".22">Επιστροφές</text>
<rect x="1130.7" y="756" width="52" height="16" fill="rgba(224,138,240,.2)" stroke="#e9a3f4" stroke-width="1.4"/>
<text x="1190.3" y="769.6" font-size="15.4" fill="#666" stroke="#666" stroke-width=".22">Καταχωρημένες δαπάνες</text>
<rect x="1375.1" y="756" width="52" height="16" fill="rgba(231,76,60,.2)" stroke="#e8766c" stroke-width="1.4"/>
<text x="1434.7" y="769.6" font-size="15.4" fill="#666" stroke="#666" stroke-width=".22">Πληρωμές</text>
</svg>

</div>
<div id="fade"></div>
</body>
</html>
